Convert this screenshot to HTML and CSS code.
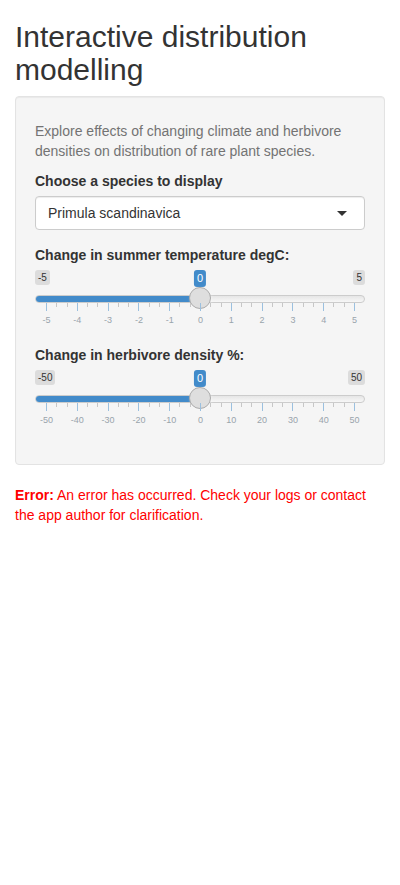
FILE: index.html
```html
<!DOCTYPE html>
<html lang="en">
<head>
<meta charset="utf-8">
<title>Interactive distribution modelling</title>
<link rel="stylesheet" href="styles.css">
</head>
<body>
<div class="container">
  <h2 class="title">Interactive distribution modelling</h2>
  <div class="well">
    <p class="help-block">Explore effects of changing climate and herbivore densities on distribution of rare plant species.</p>
    <div class="form-group">
      <label class="control-label">Choose a species to display</label>
      <div class="selectize-input">
        <span>Primula scandinavica</span>
        <span class="caret"></span>
      </div>
    </div>
    <div class="form-group">
      <label class="control-label">Change in summer temperature degC:</label>
      <div class="irs">
        <div class="irs-labels"><span class="irs-min">-5</span><span class="irs-max">5</span></div>
        <span class="irs-single">0</span>
        <div class="irs-line"><div class="irs-bar" style="width:50%"></div></div>
        <span class="irs-handle"></span>
        <div class="irs-grid">
          <div class="ticks">
            <i class="pol"></i><i class="pol small"></i><i class="pol small"></i>
            <i class="pol"></i><i class="pol small"></i><i class="pol small"></i>
            <i class="pol"></i><i class="pol small"></i><i class="pol small"></i>
            <i class="pol"></i><i class="pol small"></i><i class="pol small"></i>
            <i class="pol"></i><i class="pol small"></i><i class="pol small"></i>
            <i class="pol"></i><i class="pol small"></i><i class="pol small"></i>
            <i class="pol"></i><i class="pol small"></i><i class="pol small"></i>
            <i class="pol"></i><i class="pol small"></i><i class="pol small"></i>
            <i class="pol"></i><i class="pol small"></i><i class="pol small"></i>
            <i class="pol"></i><i class="pol small"></i><i class="pol small"></i>
            <i class="pol"></i>
          </div>
          <div class="grid-texts">
            <span>-5</span><span>-4</span><span>-3</span><span>-2</span><span>-1</span><span>0</span><span>1</span><span>2</span><span>3</span><span>4</span><span>5</span>
          </div>
        </div>
      </div>
    </div>
    <div class="form-group">
      <label class="control-label">Change in herbivore density %:</label>
      <div class="irs">
        <div class="irs-labels"><span class="irs-min">-50</span><span class="irs-max">50</span></div>
        <span class="irs-single">0</span>
        <div class="irs-line"><div class="irs-bar" style="width:50%"></div></div>
        <span class="irs-handle"></span>
        <div class="irs-grid">
          <div class="ticks">
            <i class="pol"></i><i class="pol small"></i><i class="pol small"></i>
            <i class="pol"></i><i class="pol small"></i><i class="pol small"></i>
            <i class="pol"></i><i class="pol small"></i><i class="pol small"></i>
            <i class="pol"></i><i class="pol small"></i><i class="pol small"></i>
            <i class="pol"></i><i class="pol small"></i><i class="pol small"></i>
            <i class="pol"></i><i class="pol small"></i><i class="pol small"></i>
            <i class="pol"></i><i class="pol small"></i><i class="pol small"></i>
            <i class="pol"></i><i class="pol small"></i><i class="pol small"></i>
            <i class="pol"></i><i class="pol small"></i><i class="pol small"></i>
            <i class="pol"></i><i class="pol small"></i><i class="pol small"></i>
            <i class="pol"></i>
          </div>
          <div class="grid-texts">
            <span>-50</span><span>-40</span><span>-30</span><span>-20</span><span>-10</span><span>0</span><span>10</span><span>20</span><span>30</span><span>40</span><span>50</span>
          </div>
        </div>
      </div>
    </div>
  </div>
  <div class="shiny-output-error"><b>Error:</b> An error has occurred. Check your logs or contact the app author for clarification.</div>
</div>
</body>
</html>
```

FILE: styles.css
```css
* { box-sizing: border-box; }
html, body { margin: 0; padding: 0; }
body {
  font-family: "Liberation Sans", Arial, Helvetica, sans-serif;
  font-size: 14px;
  line-height: 1.42857143;
  color: #333;
  background: #fff;
}
.container { padding: 0 15px; }
.title {
  font-size: 30px;
  font-weight: 500;
  line-height: 1.1;
  margin: 20px 0 10px;
  color: #333;
}
.well {
  min-height: 20px;
  padding: 19px;
  margin-bottom: 20px;
  background-color: #f5f5f5;
  border: 1px solid #e3e3e3;
  border-radius: 4px;
  box-shadow: inset 0 1px 1px rgba(0,0,0,0.05);
}
.help-block {
  display: block;
  margin: 5px 0 10px;
  color: #737373;
}
.form-group { margin-bottom: 15px; }
.control-label {
  display: inline-block;
  max-width: 100%;
  margin-bottom: 5px;
  font-weight: bold;
}
.selectize-input {
  display: flex;
  align-items: center;
  justify-content: space-between;
  height: 34px;
  padding: 6px 12px;
  line-height: 20px;
  background: #fff;
  border: 1px solid #ccc;
  border-radius: 4px;
  box-shadow: inset 0 1px 1px rgba(0,0,0,0.075);
  color: #333;
}
.caret {
  width: 0;
  height: 0;
  border-style: solid;
  border-width: 5px 5px 0 5px;
  border-color: #333 transparent transparent transparent;
  margin-right: 5px;
  margin-top: 1px;
}
.irs {
  position: relative;
  height: 60px;
}
.irs-labels {
  display: flex;
  justify-content: space-between;
}
.irs-min, .irs-max {
  padding: 1px 3px;
  background-color: rgba(0,0,0,0.1);
  border-radius: 3px;
  font-size: 10px;
  line-height: 1.333;
  color: #333;
}
.irs-single {
  position: absolute;
  top: 0;
  left: 50%;
  transform: translateX(-50%);
  padding: 1px 3px;
  background-color: #428bca;
  color: #fff;
  border-radius: 3px;
  font-size: 11px;
  line-height: 1.333;
}
.irs-line {
  position: absolute;
  top: 25px;
  left: 0;
  right: 0;
  height: 8px;
  border: 1px solid #ccc;
  border-radius: 8px;
  background: linear-gradient(to bottom, #dedede -50%, #fff 150%);
  overflow: hidden;
}
.irs-bar {
  height: 100%;
  margin-top: -1px;
  height: 8px;
  margin-left: -1px;
  background: #428bca;
  border-radius: 8px 0 0 8px;
}
.irs-handle {
  position: absolute;
  top: 17px;
  left: calc(50% - 11px);
  width: 22px;
  height: 22px;
  border: 1px solid #ababab;
  background-color: #dedede;
  border-radius: 50%;
  box-shadow: 1px 1px 3px rgba(255,255,255,0.3);
}
.irs-grid {
  position: absolute;
  left: 11px;
  right: 10px;
  bottom: 0;
  height: 27px;
}
.ticks {
  display: flex;
  justify-content: space-between;
  align-items: flex-start;
  height: 13px;
}
.pol {
  display: block;
  width: 1px;
  height: 8px;
  background: #9bc0df;
}
.pol.small {
  height: 4px;
  background: #c7c7c7;
}
.grid-texts {
  display: flex;
  justify-content: space-between;
  height: 9px;
}
.grid-texts span {
  display: flex;
  justify-content: center;
  width: 1px;
  white-space: nowrap;
  font-size: 9px;
  line-height: 9px;
  color: #99a4ac;
}
.shiny-output-error {
  color: red;
}
```
